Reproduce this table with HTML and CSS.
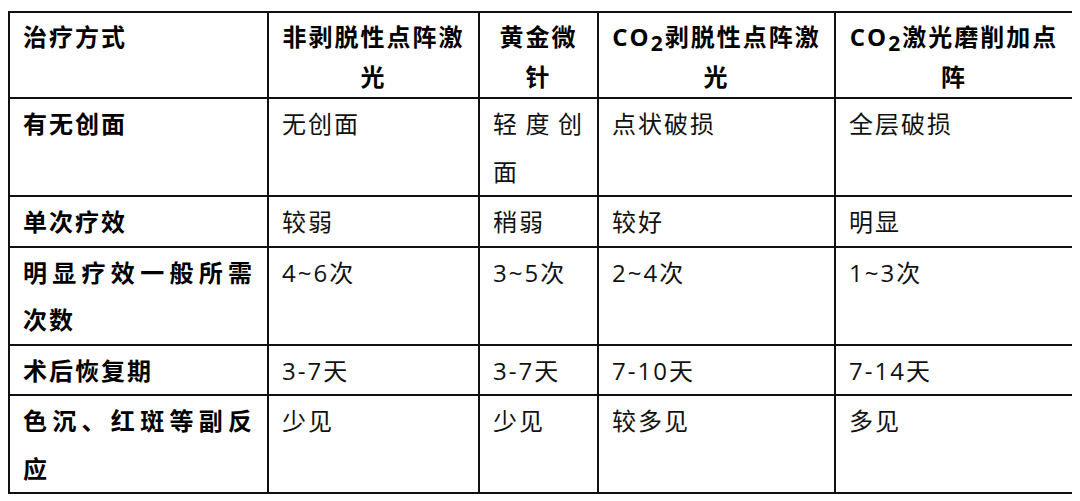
FILE: index.html
```html
<!DOCTYPE html>
<html lang="zh-CN">
<head>
<meta charset="utf-8">
<title>点阵激光治疗方式对比</title>
<link rel="stylesheet" href="styles.css">
</head>
<body>
<table class="cmp">
  <colgroup>
    <col class="c1"><col class="c2"><col class="c3"><col class="c4"><col class="c5">
  </colgroup>
  <thead>
    <tr>
      <th class="lead">治疗方式</th>
      <th>非剥脱性点阵激光</th>
      <th>黄金微针</th>
      <th class="narrow">CO<sub class="sub">2</sub>剥脱性点阵激光</th>
      <th class="narrow">CO<sub class="sub">2</sub>激光磨削加点阵</th>
    </tr>
  </thead>
  <tbody>
    <tr>
      <th>有无创面</th>
      <td>无创面</td>
      <td>轻度创面</td>
      <td>点状破损</td>
      <td>全层破损</td>
    </tr>
    <tr>
      <th>单次疗效</th>
      <td>较弱</td>
      <td>稍弱</td>
      <td>较好</td>
      <td>明显</td>
    </tr>
    <tr>
      <th>明显疗效一般所需次数</th>
      <td>4~6次</td>
      <td>3~5次</td>
      <td>2~4次</td>
      <td>1~3次</td>
    </tr>
    <tr>
      <th>术后恢复期</th>
      <td>3-7天</td>
      <td>3-7天</td>
      <td>7-10天</td>
      <td>7-14天</td>
    </tr>
    <tr>
      <th>色沉、红斑等副反应</th>
      <td>少见</td>
      <td>少见</td>
      <td>较多见</td>
      <td>多见</td>
    </tr>
  </tbody>
</table>
</body>
</html>
```

FILE: styles.css
```css
html, body {
  background: #ffffff;
}

body {
  margin: 11px 8px 0;
  font-family: "Open Sans", "Noto Sans CJK SC", sans-serif;
  color: #111111;
}

.cmp {
  border-collapse: collapse;
  table-layout: fixed;
  width: 1064px;
}

.c1 { width: 259px; }
.c2 { width: 211px; }
.c3 { width: 119px; }
.c4 { width: 237px; }
.c5 { width: 238px; }

.cmp th,
.cmp td {
  border: 2px solid #111111;
  padding: 1px 13px 0;
  font-size: 24px;
  letter-spacing: 2px;
  line-height: 47.5px;
  vertical-align: top;
  text-align: justify;
  text-align-last: left;
}

.cmp th {
  font-weight: 700;
  color: #000000;
}

.cmp td {
  font-weight: 400;
  color: #111111;
}

.cmp thead th {
  line-height: 40px;
  padding-top: 4px;
  text-align: center;
  text-align-last: center;
}

.cmp thead th.lead {
  text-align: left;
  text-align-last: left;
}

.cmp thead th.narrow {
  padding: 4px 12px 0;
}

.sub {
  font-size: 21px;
  line-height: 0;
  vertical-align: -5px;
}
```
